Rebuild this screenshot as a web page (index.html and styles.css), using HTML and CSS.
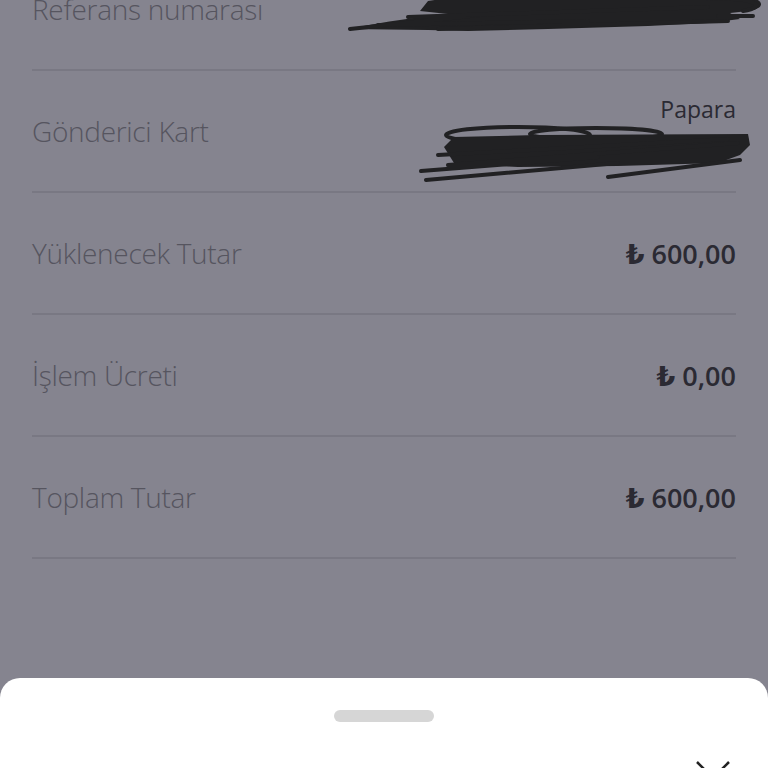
FILE: index.html
```html
<!DOCTYPE html>
<html lang="tr">
<head>
  <meta charset="UTF-8" />
  <meta name="viewport" content="width=device-width, initial-scale=1.0"/>
  <title>İşlem Detayı</title>
  <link rel="stylesheet" href="styles.css">
</head>
<body>
  <div class="screen">
    <div class="list">
      <div class="row">
        <span class="label">Referans numarası</span>
        <!-- karalanmış referans numarası -->
        <svg class="scribble scribble-ref" width="414" height="44" viewBox="0 0 414 44">
          <path class="blob" d="M0,38 C40,30 70,26 100,23 L72,20 L80,10 L120,4 L200,0 L350,0 L402,6 C418,10 416,18 400,20 L382,22 L392,28 L360,32 L300,35 L200,38 L120,40 L80,39 Z"/>
          <path class="ink" d="M2,38 L150,22 M60,26 L360,16 M90,38 L380,30 M360,8 C410,6 420,16 395,20 M370,25 L405,25 M30,34 L240,30"/>
        </svg>
      </div>
      <div class="row">
        <span class="label">Gönderici Kart</span>
        <div class="card">
          <span class="bank">Papara</span>
          <svg class="scribble scribble-card" width="332" height="60" viewBox="0 0 332 60">
            <ellipse class="ink" cx="100" cy="12" rx="72" ry="8"/>
            <ellipse class="ink" cx="178" cy="11" rx="66" ry="6"/>
            <path class="blob" d="M36,14 L120,12 L330,11 L332,22 L322,32 L300,40 L200,43 L100,44 L36,40 L26,24 Z"/>
            <path class="ink" d="M3,48 L180,34 M8,57 L200,40 M190,54 L322,37 M30,42 L320,20 M20,32 L310,16"/>
          </svg>
        </div>
      </div>
      <div class="row">
        <span class="label">Yüklenecek Tutar</span>
        <span class="value">₺ 600,00</span>
      </div>
      <div class="row">
        <span class="label">İşlem Ücreti</span>
        <span class="value">₺ 0,00</span>
      </div>
      <div class="row">
        <span class="label">Toplam Tutar</span>
        <span class="value">₺ 600,00</span>
      </div>
    </div>

    <!-- alt sayfa -->
    <div class="sheet">
      <div class="handle"></div>
      <div class="sheet-head">
        <svg class="close" width="36" height="36" viewBox="0 0 36 36">
          <path d="M2,2 L34,34 M34,2 L2,34"/>
        </svg>
      </div>
    </div>
  </div>
</body>
</html>
```

FILE: styles.css
```css
body {
  margin: 0;
  font-family: "Open Sans", "DejaVu Sans", sans-serif;
}
.screen {
  position: relative;
  width: 768px;
  height: 768px;
  overflow: hidden;
  background: #85848f;
}
.list {
  margin: -51px 32px 0;
}
.row {
  height: 120px;
  display: flex;
  align-items: center;
  justify-content: space-between;
  border-bottom: 2px solid #797883;
}
.label {
  font-size: 28px;
  font-weight: 300;
  color: #56555f;
  letter-spacing: -0.3px;
}
.value {
  font-size: 27px;
  font-weight: 600;
  color: #2b2a33;
}
.scribble .blob {
  fill: #212123;
}
.scribble .ink {
  fill: none;
  stroke: #212123;
  stroke-width: 4;
  stroke-linecap: round;
}
.scribble-ref {
  margin-right: -26px;
  margin-top: 8px;
}
.card {
  display: flex;
  flex-direction: column;
  align-items: flex-end;
  padding-top: 16px;
}
.bank {
  font-size: 23px;
  color: #2b2a33;
  line-height: 28px;
}
.scribble-card {
  margin-right: -14px;
  margin-top: 0;
}
.sheet {
  position: absolute;
  top: 678px;
  left: 0;
  right: 0;
  height: 120px;
  background: #fff;
  border-radius: 20px 20px 0 0;
}
.handle {
  width: 100px;
  height: 12px;
  margin: 32px auto 0;
  background: #d6d6d6;
  border-radius: 6px;
}
.sheet-head {
  display: flex;
  justify-content: flex-end;
  padding: 38px 37px 0;
}
.close path {
  stroke: #222;
  stroke-width: 2.5;
  fill: none;
}
```
